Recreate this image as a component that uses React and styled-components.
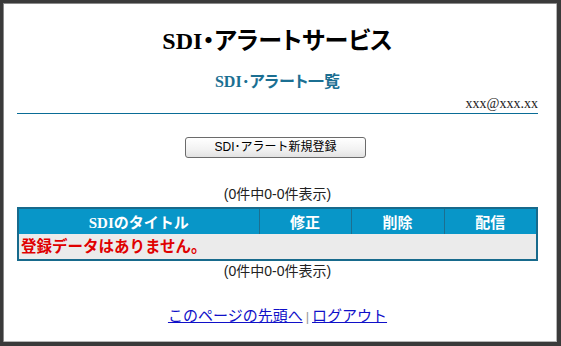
import styled, { createGlobalStyle } from 'styled-components';

const GlobalStyle = createGlobalStyle`
	html, body {
		margin: 0;
		padding: 0;
		background: #fff;
	}
	body {
		font-family: "Liberation Serif", "Noto Sans CJK JP", serif;
		color: #000;
	}
`;

const Frame = styled.div`
	box-sizing: border-box;
	width: 561px;
	height: 346px;
	border-style: solid;
	border-color: #3a3a3a;
	border-width: 3px 4px 4px 3px;
	box-shadow: inset 1px 1px 0 #8a8a8a, inset -1px -1px 0 #b5b5b5;
	padding: 23px 19px 0 14px;
	background: #fff;
`;

const Title = styled.h1`
	margin: 0;
	font-size: 24px;
	line-height: 30px;
	font-weight: bold;
	text-align: center;
	font-feature-settings: "palt";
`;

const SubTitle = styled.h2`
	margin: 16px 0 0;
	font-size: 16px;
	line-height: 20px;
	font-weight: bold;
	text-align: center;
	color: #1b6f92;
	font-feature-settings: "palt";
`;

const UserBar = styled.div`
	margin-top: 4px;
	padding-bottom: 1px;
	border-bottom: 1px solid #0a6c96;
	text-align: right;
	font-size: 14px;
	line-height: 16px;
	color: #222;
`;

const ButtonRow = styled.div`
	display: flex;
	justify-content: center;
	margin-top: 23px;
	padding-right: 4px;
`;

const Button = styled.button`
	width: 181px;
	height: 21px;
	padding: 0;
	border: 1px solid #6b6b6b;
	border-radius: 3px;
	background: linear-gradient(#ffffff, #f2f2f2 60%, #e2e2e2);
	font-family: "Liberation Sans", "Noto Sans CJK JP", sans-serif;
	font-size: 12px;
	line-height: 19px;
	color: #000;
	cursor: pointer;
`;

const Count = styled.div`
	margin-top: ${({ $top }) => $top}px;
	text-align: center;
	font-family: "Liberation Sans", "Noto Sans CJK JP", sans-serif;
	font-size: 14px;
	line-height: 18px;
	color: #222;
`;

const Table = styled.table`
	width: 100%;
	margin-top: 4px;
	border-collapse: collapse;
	border: 2px solid #176a8c;
	table-layout: fixed;

	& th {
		height: 25px;
		padding: 0;
		background: #0896c8;
		color: #fff;
		font-size: 15px;
		font-weight: bold;
		border-left: 1px solid #1c6f90;
	}
	& th:first-child {
		border-left: none;
	}
`;

const EmptyCell = styled.td`
	height: 25px;
	padding: 0 0 0 2px;
	background: #ebebeb;
	color: #e00000;
	font-family: "Liberation Sans", "Noto Sans CJK JP", sans-serif;
	font-size: 15.5px;
	font-weight: bold;
	line-height: 25px;
`;

const Links = styled.div`
	margin-top: 26px;
	text-align: center;
	font-family: "Liberation Sans", "Noto Sans CJK JP", sans-serif;
	font-size: 15px;
	line-height: 20px;

	& a {
		color: #1010c8;
		text-decoration: underline;
	}
	& span {
		color: #999;
		font-size: 13px;
		margin: 0 3px;
	}
`;

export default function App() {
	return (
		<>
			<GlobalStyle />
			<Frame>
				<Title>SDI・アラートサービス</Title>
				<SubTitle>SDI･アラート一覧</SubTitle>
				<UserBar>xxx@xxx.xx</UserBar>
				<ButtonRow>
					<Button type="button">SDI･アラート新規登録</Button>
				</ButtonRow>
				<Count $top={27}>(0件中0-0件表示)</Count>
				<Table>
					<colgroup>
						<col style={{ width: 241 }} />
						<col style={{ width: 92 }} />
						<col style={{ width: 93 }} />
						<col />
					</colgroup>
					<thead>
						<tr>
							<th>SDIのタイトル</th>
							<th>修正</th>
							<th>削除</th>
							<th>配信</th>
						</tr>
					</thead>
					<tbody>
						<tr>
							<EmptyCell colSpan={4}>登録データはありません。</EmptyCell>
						</tr>
					</tbody>
				</Table>
				<Count $top={1}>(0件中0-0件表示)</Count>
				<Links>
					<a href="#top">このページの先頭へ</a>
					<span>|</span>
					<a href="#logout">ログアウト</a>
				</Links>
			</Frame>
		</>
	);
}
